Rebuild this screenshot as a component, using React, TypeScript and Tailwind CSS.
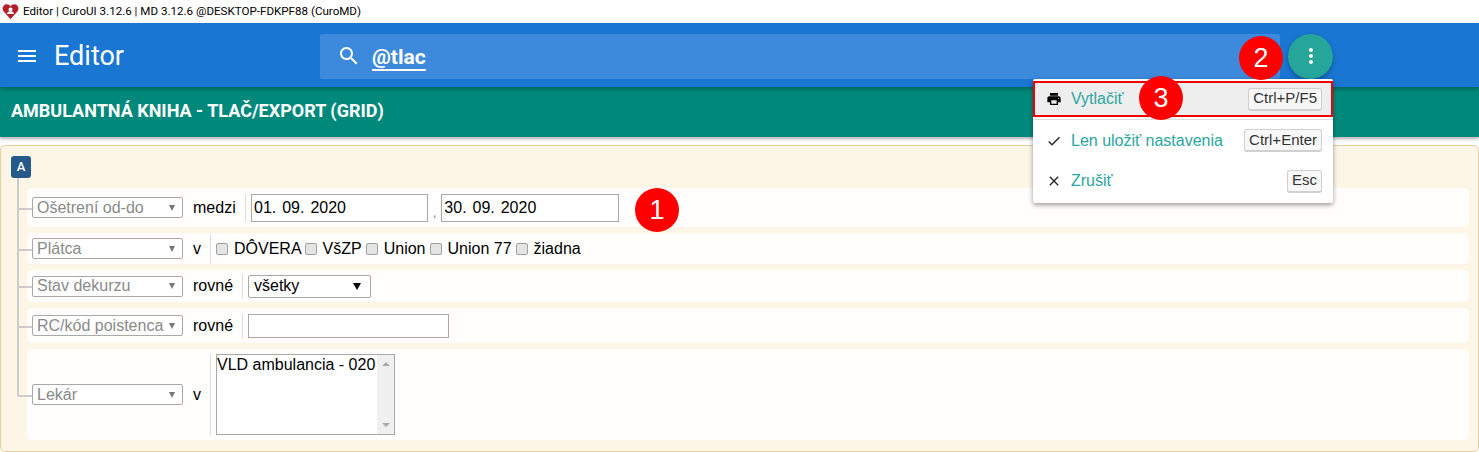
const menuPath = "M3 18h18v-2H3v2zm0-5h18v-2H3v2zm0-7v2h18V6H3z"
const searchPath =
  "M15.5 14h-.79l-.28-.27C15.41 12.59 16 11.11 16 9.5 16 5.91 13.09 3 9.5 3S3 5.91 3 9.5 5.91 16 9.5 16c1.61 0 3.09-.59 4.23-1.57l.27.28v.79l5 4.99L20.49 19l-4.99-5zm-6 0C7.01 14 5 11.99 5 9.5S7.01 5 9.5 5 14 7.01 14 9.5 11.99 14 9.5 14z"
const morePath =
  "M12 8c1.1 0 2-.9 2-2s-.9-2-2-2-2 .9-2 2 .9 2 2 2zm0 2c-1.1 0-2 .9-2 2s.9 2 2 2 2-.9 2-2-.9-2-2-2zm0 6c-1.1 0-2 .9-2 2s.9 2 2 2 2-.9 2-2-.9-2-2-2z"
const printPath =
  "M19 8H5c-1.66 0-3 1.34-3 3v6h4v4h12v-4h4v-6c0-1.66-1.34-3-3-3zm-3 11H8v-5h8v5zm3-7c-.55 0-1-.45-1-1s.45-1 1-1 1 .45 1 1-.45 1-1 1zm-1-9H6v4h12V3z"
const checkPath = "M9 16.17L4.83 12l-1.42 1.41L9 19 21 7l-1.41-1.41z"
const closePath =
  "M19 6.41L17.59 5 12 10.59 6.41 5 5 6.41 10.59 12 5 17.59 6.41 19 12 13.41 17.59 19 19 17.59 13.41 12z"

function Icon({ d, className }: { d: string; className: string }) {
  return (
    <svg viewBox="0 0 24 24" fill="currentColor" className={className}>
      <path d={d} />
    </svg>
  )
}

function Badge({ label, className }: { label: string; className: string }) {
  return (
    <div
      className={`absolute flex h-[44px] w-[44px] items-center justify-center rounded-full bg-[#fe0000] text-[27px] text-white ${className}`}
    >
      {label}
    </div>
  )
}

function FieldSelect({ label }: { label: string }) {
  return (
    <div className="flex h-[21px] w-[151px] shrink-0 items-center justify-between rounded-[2px] border border-[#a9a9a9] bg-white pl-[4px] pr-[7px] text-[16px] leading-none text-[#8a8a8a]">
      <span className="whitespace-nowrap">{label}</span>
      <span className="h-0 w-0 border-x-[3.5px] border-t-[6px] border-x-transparent border-t-[#777]" />
    </div>
  )
}

function Check2({ label, className = "" }: { label: string; className?: string }) {
  return (
    <label className={`flex items-center text-[16px] text-black ${className}`}>
      <span className="mr-[6px] h-[12px] w-[12px] rounded-[2px] border border-[#a0a0a0] bg-[#e4e4e4]" />
      {label}
    </label>
  )
}

function Shortcut({ children }: { children: React.ReactNode }) {
  return (
    <kbd className="flex h-[23px] items-center rounded-[3px] border border-b-2 border-[#d0d0d0] bg-[#f7f7f7] px-[4px] font-['Liberation_Sans',sans-serif] text-[15px] text-[#333333]">
      {children}
    </kbd>
  )
}

function Row({
  label,
  op,
  opWidth,
  className,
  children,
}: {
  label: string
  op: string
  opWidth: string
  className: string
  children: React.ReactNode
}) {
  return (
    <div className={`relative flex items-center rounded-[5px] bg-[#fffefc] pl-[5px] ${className}`}>
      {/* tree stub */}
      <span className="absolute left-[-9px] top-1/2 h-[2px] w-[14px] bg-[#cccccc]" />
      <FieldSelect label={label} />
      <span className={`pl-[10px] text-[16px] text-black ${opWidth}`}>{op}</span>
      <div className="flex h-full items-center">{children}</div>
    </div>
  )
}

const Sep = ({ h }: { h: string }) => <span className={`mr-[5px] w-px bg-[#dddddd] ${h}`} />

export default function App() {
  return (
    <div className="relative h-[452px] w-[1479px] overflow-hidden bg-white font-['Liberation_Sans',Arial,sans-serif]">
      {/* window title */}
      <div className="flex h-[23px] items-center bg-white pl-[2px] font-['Roboto',sans-serif] text-[11.6px] text-black">
        <svg viewBox="0 0 20 20" className="mr-[4px] h-[17px] w-[17px]">
          <path d="M10 19 1.5 9.5C-.5 6 1.5 1.5 5.5 1.5c2 0 3.5 1 4.5 2.5C11 2.5 12.5 1.5 14.5 1.5c4 0 6 4.5 4 8z" fill="#b3202c" />
          <circle cx="10" cy="7.5" r="2.3" fill="#fff" />
          <path d="M5.8 13c.4-2.5 2-3.3 4.2-3.3s3.8.8 4.2 3.3z" fill="#fff" />
        </svg>
        Editor | CuroUI 3.12.6 | MD 3.12.6 @DESKTOP-FDKPF88 (CuroMD)
      </div>

      {/* app bar */}
      <header className="relative z-20 flex h-[64px] items-center bg-[#1976d2] pt-[2px] font-['Roboto',sans-serif] text-white shadow-[0_2px_4px_rgba(0,0,0,0.3)]">
        <Icon d={menuPath} className="ml-[15px] h-[24px] w-[24px]" />
        <h1 className="ml-[15px] w-[266px] text-[27px] leading-none">Editor</h1>
        <div className="flex h-[45px] w-[960px] items-center rounded-[2px] bg-[#3d89db] pl-[17px]">
          <Icon d={searchPath} className="h-[24px] w-[24px]" />
          <span className="ml-[11px] mt-[5px] border-b-2 border-white text-[21px] font-bold leading-[23px]">@tlac</span>
        </div>
        <button className="ml-[8px] flex h-[45px] w-[45px] items-center justify-center rounded-full bg-[#26a69a] shadow-[0_2px_4px_rgba(0,0,0,0.3)]">
          <Icon d={morePath} className="h-[24px] w-[24px]" />
        </button>
      </header>

      {/* page title */}
      <div className="relative z-10 flex h-[50px] items-center bg-[#00897b] pb-[3px] pl-[11px] font-['Roboto',sans-serif] text-[18px] font-bold text-white shadow-[0_2px_3px_rgba(0,0,0,0.3)]">
        AMBULANTNÁ KNIHA - TLAČ/EXPORT (GRID)
      </div>

      {/* filter panel */}
      <div className="relative mt-[8px] h-[307px] rounded-[5px] border border-[#e6cfa0] bg-[#fdf5e6] pl-[26px] pr-[9px] pt-[42px]">
        <div className="absolute left-[10px] top-[10px] flex h-[22px] w-[20px] items-center justify-center rounded-[3px] bg-[#255a8a] font-['Roboto',sans-serif] text-[13px] font-medium text-white">
          A
        </div>
        <span className="absolute left-[16px] top-[32px] h-[218px] w-[2px] bg-[#cccccc]" />

        <div className="flex flex-col gap-[6px]">
          <Row label="Ošetrení od-do" op="medzi" opWidth="w-[62px]" className="h-[39px]">
            <Sep h="h-[28px]" />
            <input readOnly value="01. 09. 2020" className="h-[28px] w-[177px] border border-[#a9a9a9] bg-white pl-[2px] text-[16px] text-black [word-spacing:1.5px]" />
            <span className="mx-[5px] mt-[10px] text-[12px] text-gray-500">,</span>
            <input readOnly value="30. 09. 2020" className="h-[28px] w-[178px] border border-[#a9a9a9] bg-white pl-[2px] text-[16px] text-black [word-spacing:1.5px]" />
          </Row>
          <Row label="Plátca" op="v" opWidth="w-[27px]" className="h-[31px]">
            <Sep h="h-[28px]" />
            <div className="flex items-center gap-[4px]">
              <Check2 label="DÔVERA" className="-mr-px" />
              <Check2 label="VšZP" />
              <Check2 label="Union" />
              <Check2 label="Union 77" />
              <Check2 label="žiadna" />
            </div>
          </Row>
          <Row label="Stav dekurzu" op="rovné" opWidth="w-[59px]" className="h-[32px]">
            <Sep h="h-[24px]" />
            <div className="flex h-[23px] w-[123px] items-center justify-between rounded-[2px] border border-[#a9a9a9] bg-white pl-[5px] pr-[9px] text-[16px] text-black">
              všetky
              <span className="h-0 w-0 border-x-[4px] border-t-[7px] border-x-transparent border-t-black" />
            </div>
          </Row>
          <Row label="RC/kód poistenca" op="rovné" opWidth="w-[59px]" className="h-[35px]">
            <Sep h="h-[24px]" />
            <input readOnly className="h-[24px] w-[201px] border border-[#a9a9a9] bg-white" />
          </Row>
          <Row label="Lekár" op="v" opWidth="w-[27px]" className="h-[91px]">
            <Sep h="h-[81px]" />
            <div className="flex h-[81px] w-[179px] border border-[#a9a9a9] bg-white text-[16px] leading-[20px] text-black">
              <span className="whitespace-nowrap">VLD ambulancia - 020</span>
              <span className="ml-auto flex w-[17px] flex-col items-center justify-between bg-[#f0f0f0] py-[7px]">
                <span className="h-0 w-0 border-x-[4px] border-b-[4px] border-x-transparent border-b-[#aaaaaa]" />
                <span className="h-0 w-0 border-x-[4px] border-t-[4px] border-x-transparent border-t-[#aaaaaa]" />
              </span>
            </div>
          </Row>
        </div>
      </div>

      {/* action menu */}
      <div className="absolute left-[1033px] top-[79px] z-30 h-[124px] w-[300px] rounded-[2px] bg-white text-[16px] text-[#2aa7a0] shadow-[0_2px_5px_rgba(0,0,0,0.4)]">
        <div className="my-[2px] flex h-[36px] items-center justify-between border-2 border-[#ee0000] bg-[#eeeeee] pl-[11px] pr-[9px]">
          <span className="flex items-center text-[#2aa7a0]">
            <Icon d={printPath} className="mr-[9px] h-[16px] w-[16px] text-black" />
            Vytlačiť
          </span>
          <Shortcut>Ctrl+P/F5</Shortcut>
        </div>
        <div className="flex h-[42px] items-center justify-between border-t border-[#e0e0e0] pl-[13px] pr-[11px]">
          <span className="flex items-center">
            <Icon d={checkPath} className="mr-[9px] h-[16px] w-[16px] text-[#222222]" />
            Len uložiť nastavenia
          </span>
          <Shortcut>Ctrl+Enter</Shortcut>
        </div>
        <div className="flex h-[40px] items-center justify-between pl-[13px] pr-[11px]">
          <span className="flex items-center">
            <Icon d={closePath} className="mr-[9px] h-[16px] w-[16px] text-[#222222]" />
            Zrušiť
          </span>
          <Shortcut>Esc</Shortcut>
        </div>
      </div>

      {/* callouts */}
      <Badge label="1" className="left-[635px] top-[188px] z-40" />
      <Badge label="2" className="left-[1239px] top-[36px] z-40" />
      <Badge label="3" className="left-[1139px] top-[76px] z-40" />
    </div>
  )
}
